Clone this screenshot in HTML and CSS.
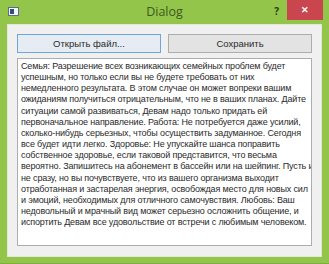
FILE: index.html
```html
<!DOCTYPE html>
<html lang="ru">
  <head>
    <meta charset="UTF-8" />
    <title>Dialog</title>
    <link rel="stylesheet" href="styles.css">
  </head>
  <body>
    <div class="window">
      <div class="titlebar">
        <div class="tb-left">
          <svg class="app-icon" width="11" height="9" viewBox="0 0 11 9">
            <rect x="0.5" y="0.5" width="10" height="8" fill="#f4f7fb" stroke="#5d6f86" />
            <rect x="2" y="2" width="4" height="5" fill="#2d4e7e" />
          </svg>
        </div>
        <div class="title">Dialog</div>
        <div class="tb-right">
          <span class="help">?</span>
          <span class="close">&#x2715;</span>
        </div>
      </div>
      <div class="client">
        <div class="buttons">
          <button class="btn default">Открыть файл...</button>
          <button class="btn">Сохранить</button>
        </div>
        <div class="textbox">
          Семья: Разрешение всех возникающих семейных проблем будет<br>
          успешным, но только если вы не будете требовать от них<br>
          немедленного результата. В этом случае он может вопреки вашим<br>
          ожиданиям получиться отрицательным, что не в ваших планах. Дайте<br>
          ситуации самой развиваться, Девам надо только придать ей<br>
          первоначальное направление. Работа: Не потребуется даже усилий,<br>
          сколько-нибудь серьезных, чтобы осуществить задуманное. Сегодня<br>
          все будет идти легко. Здоровье: Не упускайте шанса поправить<br>
          собственное здоровье, если таковой представится, что весьма<br>
          вероятно. Запишитесь на абонемент в бассейн или на шейпинг. Пусть и<br>
          не сразу, но вы почувствуете, что из вашего организма выходит<br>
          отработанная и застарелая энергия, освобождая место для новых сил<br>
          и эмоций, необходимых для отличного самочувствия. Любовь: Ваш<br>
          недовольный и мрачный вид может серьезно осложнить общение, и<br>
          испортить Девам все удовольствие от встречи с любимым человеком.
        </div>
      </div>
    </div>
  </body>
</html>
```

FILE: styles.css
```css
body {
  margin: 0;
  background-color: #93c54b;
  font-family: "Liberation Sans", Arial, sans-serif;
}

.window {
  width: 329px;
  height: 264px;
  display: flex;
  flex-direction: column;
  background-color: #93c54b;
  box-sizing: border-box;
  border-bottom: 1px solid #7fae3c;
}

.titlebar {
  height: 24px;
  display: grid;
  grid-template-columns: 1fr auto 1fr;
  align-items: center;
}
.tb-left {
  display: flex;
  align-items: center;
  padding-left: 8px;
}
.app-icon {
  display: block;
  margin-top: -2px;
}
.title {
  font-family: "Open Sans", "Noto Sans", sans-serif;
  font-size: 12.5px;
  color: #3c5a1e;
  margin-top: -1px;
}
.tb-right {
  display: flex;
  justify-content: flex-end;
  align-self: start;
  padding-right: 6px;
}
.help {
  font-family: "Open Sans", sans-serif;
  font-weight: bold;
  font-size: 10px;
  color: #2b3a18;
  margin-top: 4px;
  margin-right: 8px;
}
.close {
  width: 36px;
  height: 20px;
  background-color: #c9464e;
  color: #fff;
  font-size: 9px;
  font-weight: bold;
  display: flex;
  align-items: center;
  justify-content: center;
}

.client {
  flex: 1;
  margin: 0 7px 6px;
  background-color: #f0f0f0;
  padding: 9px 9px 10px;
  display: flex;
  flex-direction: column;
  gap: 5px;
  border: 1px solid #e2e8d8;
}

.buttons {
  display: grid;
  grid-template-columns: 1fr 1fr;
  gap: 7px;
}
.btn {
  height: 19px;
  border: 1px solid #adadad;
  background-color: #e3e3e3;
  font-family: "Liberation Sans", Arial, sans-serif;
  font-size: 9.5px;
  color: #2a2a2a;
  padding: 0;
}
.btn.default {
  border-color: #6fa7dc;
  background-color: #e5ecf3;
}

.textbox {
  flex: 1;
  background-color: #fff;
  border: 1px solid #abadb3;
  padding: 2px 3px;
  font-size: 9px;
  letter-spacing: -0.15px;
  line-height: 11.15px;
  color: #2a2a2a;
  white-space: nowrap;
  overflow: hidden;
}
```
